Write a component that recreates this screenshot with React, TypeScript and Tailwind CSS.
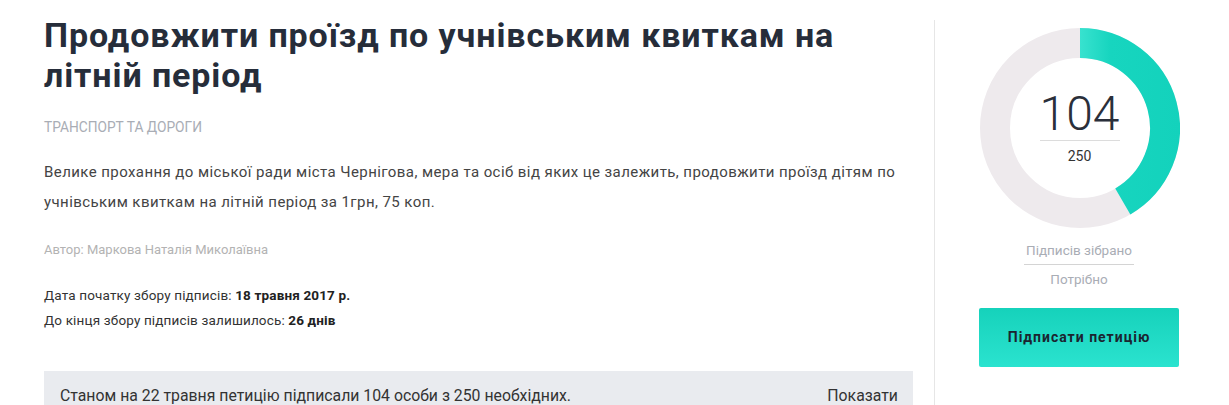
import React from "react";

function Ring() {
  const cx = 100;
  const cy = 100;
  const r = 85;
  const frac = 104 / 250;
  const angle = frac * 2 * Math.PI;
  const ex = cx + r * Math.sin(angle);
  const ey = cy - r * Math.cos(angle);
  const large = frac > 0.5 ? 1 : 0;
  return (
    <svg width={200} height={200} viewBox="0 0 200 200" className="block">
      <defs>
        <linearGradient id="tg" gradientUnits="userSpaceOnUse" x1="100" y1="0" x2="200" y2="0">
          <stop offset="0" stopColor="#38e2cf" />
          <stop offset="0.3" stopColor="#17d5bf" />
          <stop offset="1" stopColor="#13d2bc" />
        </linearGradient>
      </defs>
      <circle cx={cx} cy={cy} r={r} fill="none" stroke="#eeeaed" strokeWidth={30} />
      <path
        d={`M ${cx} ${cy - r} A ${r} ${r} 0 ${large} 1 ${ex} ${ey}`}
        fill="none"
        stroke="url(#tg)"
        strokeWidth={30}
      />
    </svg>
  );
}

export default function App() {
  return (
    <div
      className="w-[1229px] h-[405px] overflow-hidden bg-white flex"
      style={{ fontFamily: "Roboto, 'Noto Sans', sans-serif" }}
    >
      <div className="w-[869px] ml-[44px] flex flex-col">
        <h1 className="pt-[15px] text-[34px] leading-[40px] font-bold text-[#262d3a] tracking-[0.9px]">
          Продовжити проїзд по учнівським квиткам на літній період
        </h1>
        <div className="mt-[24px] text-[13.75px] leading-[16px] uppercase text-[#a9adb5]">
          Транспорт та дороги
        </div>
        <p className="mt-[22px] text-[15px] leading-[30px] text-[#444] tracking-[0.42px]">
          Велике прохання до міської ради міста Чернігова, мера та осіб від яких це залежить, продовжити проїзд дітям по учнівським квиткам на літній період за 1грн, 75 коп.
        </p>
        <div className="mt-[25px] text-[13px] leading-[16px] text-[#b3b3b3]">
          Автор: Маркова Наталія Миколаївна
        </div>
        <div className="mt-[25px] text-[13.5px] leading-[25px] text-[#333] tracking-[0.15px]">
          <div>
            Дата початку збору підписів: <b className="font-bold text-[#222]">18 травня 2017 р.</b>
          </div>
          <div>
            До кінця збору підписів залишилось: <b className="font-bold text-[#222]">26 днів</b>
          </div>
        </div>
        <div className="mt-[38px] bg-[#e9ebef] h-[60px] pl-[16px] pr-[15px] pt-[14px] flex justify-between text-[17px] leading-[20px] text-[#333]">
          <span className="inline-block origin-left scale-x-[0.93] whitespace-nowrap">
            Станом на 22 травня петицію підписали 104 особи з 250 необхідних.
          </span>
          <span className="inline-block origin-right scale-x-[0.93] whitespace-nowrap">Показати</span>
        </div>
      </div>
      <div className="ml-[21px] mt-[20px] border-l border-[#e6e6e6] w-[289px] flex flex-col items-center">
        <div className="relative mt-[8px] ml-[1px]">
          <Ring />
          <div className="absolute inset-0 flex flex-col items-center">
            <div className="mt-[60px] text-[48px] leading-[52px] font-light text-[#2a2f3a]">104</div>
            <div className="w-[80px] border-t border-[#dcdcdc]" />
            <div className="mt-[7px] text-[14px] leading-[16px] text-[#333]">250</div>
          </div>
        </div>
        <div className="mt-[14px] text-[13.5px] leading-[16px] text-[#a9adb5]">Підписів зібрано</div>
        <div className="mt-[6px] w-[110px] border-t border-[#d4d4d4]" />
        <div className="mt-[6px] text-[13.5px] leading-[16px] text-[#a9adb5]">Потрібно</div>
        <button className="mt-[21px] w-[200px] h-[59px] rounded-[2px] bg-gradient-to-b from-[#15d2bb] to-[#2ae3cf] text-[14px] font-bold text-[#1b2530] tracking-[1px]">
          Підписати петицію
        </button>
      </div>
    </div>
  );
}
